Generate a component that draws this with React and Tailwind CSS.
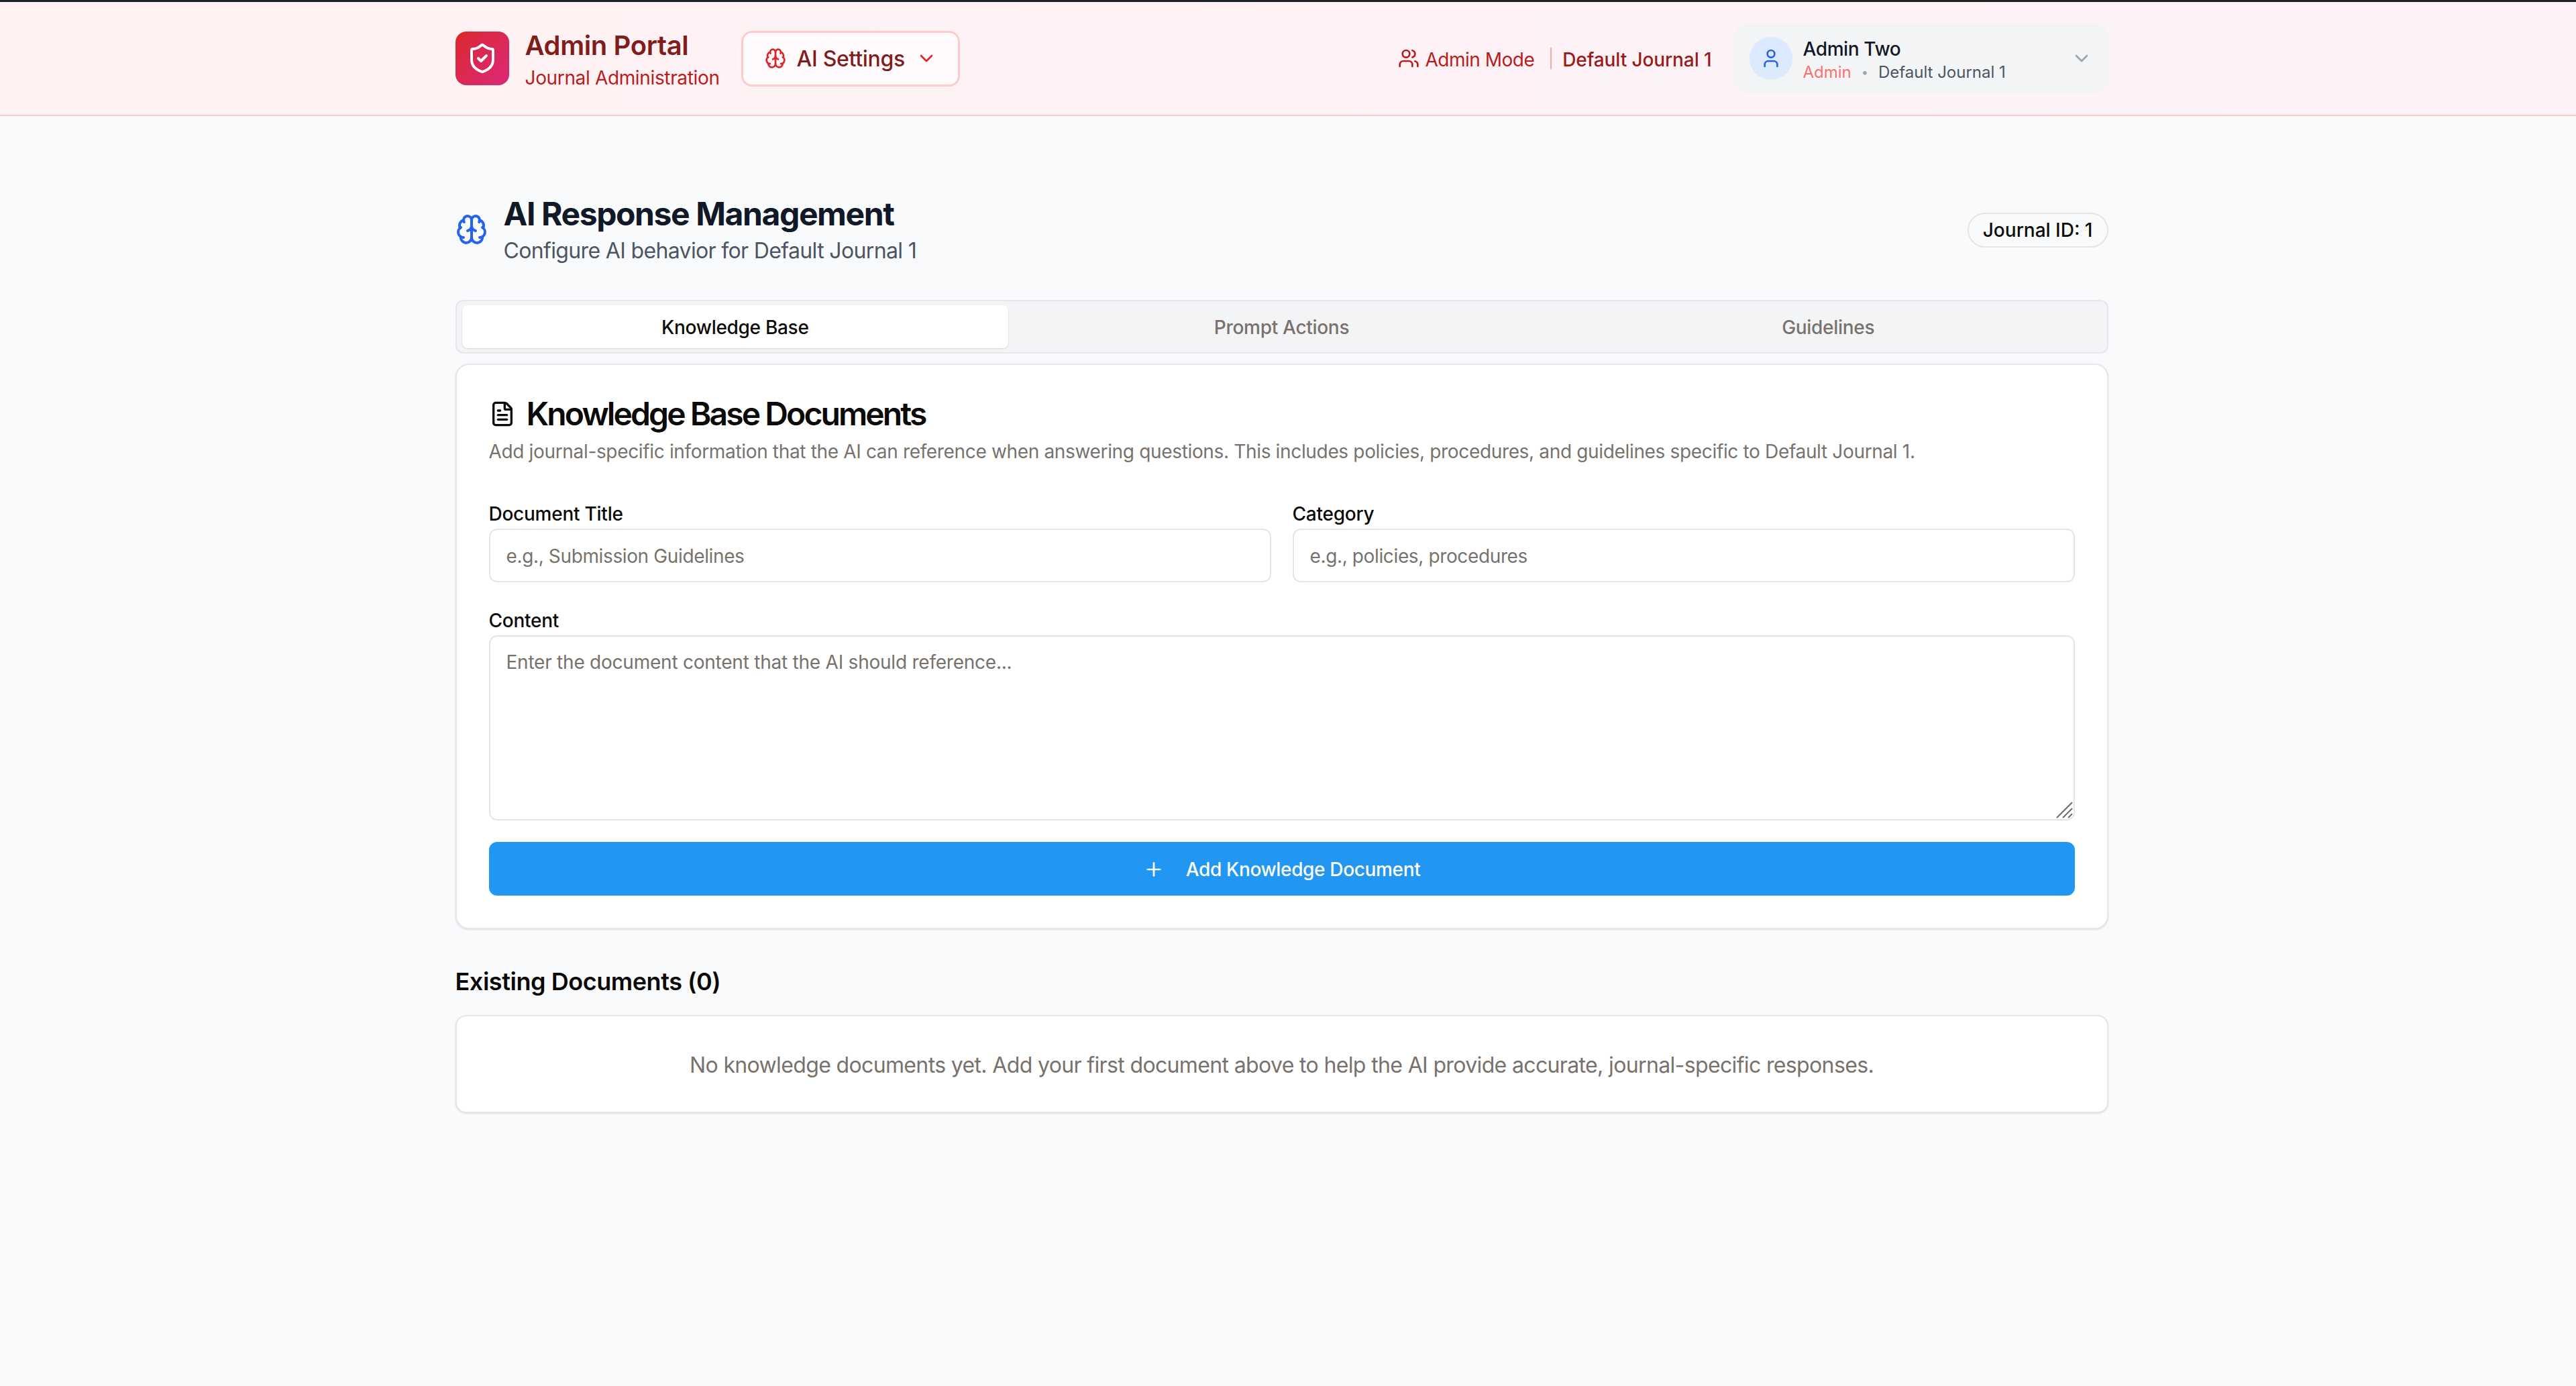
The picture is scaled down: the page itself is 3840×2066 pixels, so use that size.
import React from "react";
import { ShieldCheck, Brain, ChevronDown, Users, User, FileText, Plus } from "lucide-react";

export default function App() {
  return (
    <div className="min-h-[2066px] bg-[#f9fafb] font-['Inter',sans-serif] text-[#0c0a09] pr-[19px]">
      <header className="h-[173px] -mr-[19px] pr-[19px] border-t-[3px] border-t-[#1f2229] border-b-[2px] border-b-[#fecaca] bg-gradient-to-r from-[#fef2f2] to-[#fdf2f8]">
        <div className="w-[2464px] mx-auto h-full flex items-center justify-between">
          <div className="flex items-center">
            <div className="w-[80px] h-[80px] rounded-[16px] bg-gradient-to-br from-[#dc2626] to-[#db2777] flex items-center justify-center">
              <ShieldCheck size={48} color="#ffffff" strokeWidth={2} />
            </div>
            <div className="ml-[24px] pt-[6px]">
              <div className="text-[40px] leading-[48px] font-semibold text-[#7f1d1d] tracking-[-0.4px]">Admin Portal</div>
              <div className="mt-[4px] text-[28px] leading-[40px] text-[#b91c1c] tracking-[-0.35px]">Journal Administration</div>
            </div>
            <button className="ml-[32px] w-[326px] h-[83px] rounded-[16px] border-[3px] border-[#fecaca] bg-[#fffafb] flex items-center pl-[32px] text-[32px] font-medium text-[#7f1d1d] tracking-[-0.3px]">
              <Brain size={32} color="#dc2626" strokeWidth={2} />
              <span className="ml-[16px] pt-[2px]">AI Settings</span>
              <ChevronDown size={32} color="#dc2626" strokeWidth={2} className="ml-[16px]" />
            </button>
          </div>
          <div className="flex items-center -ml-[1px]">
            <Users size={32} color="#b91c1c" strokeWidth={2} />
            <span className="ml-[9px] pt-[3px] text-[28px] text-[#b91c1c] tracking-[-0.5px]">Admin Mode</span>
            <span className="ml-[24px] w-[2px] h-[32px] bg-[#fca5a5]" />
            <span className="ml-[16px] pt-[3px] text-[28px] font-medium text-[#991b1b] tracking-[-0.1px]">Default Journal 1</span>
            <div className="ml-[33px] w-[558px] h-[104px] rounded-[20px] bg-[#f3f4f6] flex items-center pl-[23px] pr-[24px]">
              <div className="w-[64px] h-[64px] rounded-full bg-[#dbeafe] flex items-center justify-center">
                <User size={32} color="#2563eb" strokeWidth={2} />
              </div>
              <div className="ml-[16px] flex-1 pt-[5px]">
                <div className="text-[28px] leading-[36px] font-medium text-[#111827] tracking-[-0.4px]">Admin Two</div>
                <div className="mt-[1px] text-[24px] leading-[32px] flex items-center text-[#4b5563]">
                  <span className="text-[#f87171]">Admin</span>
                  <span className="mx-[15px] text-[#9ca3af] text-[18px]">•</span>
                  <span>Default Journal 1</span>
                </div>
              </div>
              <ChevronDown size={32} color="#9ca3af" strokeWidth={2} />
            </div>
          </div>
        </div>
      </header>

      <main className="w-[2464px] mx-auto pt-[116px]">
        <div className="flex items-center justify-between">
          <div className="flex items-center">
            <Brain size={48} color="#2563eb" strokeWidth={2} className="-mt-[4px]" />
            <div className="ml-[24px]">
              <h1 className="text-[48px] leading-[60px] font-bold text-[#111827] tracking-[-1.4px]">AI Response Management</h1>
              <p className="pt-[1px] text-[32px] leading-[48px] text-[#4b5563] tracking-[-0.65px]">Configure AI behavior for Default Journal 1</p>
            </div>
          </div>
          <span className="-mt-[2px] h-[52px] px-[21px] rounded-full border-[2px] border-[#e7e5e4] flex items-center text-[28px] font-medium">Journal ID: 1</span>
        </div>

        <div className="mt-[49px] h-[80px] rounded-[12px] border-[2px] border-[#e5e7eb] bg-[#f3f4f6] grid grid-cols-3 items-center px-[8px] text-[28px] font-medium text-[#78716c] tracking-[-0.3px]">
          <div className="h-[64px] pt-[2px] rounded-[8px] bg-white text-[#0c0a09] flex items-center justify-center shadow-sm">Knowledge Base</div>
          <div className="pt-[2px] text-center">Prompt Actions</div>
          <div className="pt-[2px] text-center">Guidelines</div>
        </div>

        <section className="mt-[15px] h-[843px] rounded-[20px] border-[2px] border-[#e5e7eb] bg-white shadow-sm px-[48px] pt-[41px]">
          <div className="flex items-center h-[64px]">
            <FileText size={40} color="#0c0a09" strokeWidth={2} />
            <h2 className="ml-[16px] text-[48px] leading-[64px] font-semibold tracking-[-2.9px]">Knowledge Base Documents</h2>
          </div>
          <p className="mt-[4px] text-[28px] leading-[40px] text-[#78716c] tracking-[-0.34px]">Add journal-specific information that the AI can reference when answering questions. This includes policies, procedures, and guidelines specific to Default Journal 1.</p>

          <div className="mt-[57px] grid grid-cols-2 gap-[32px]">
            <label className="block">
              <span className="block text-[28px] leading-[32px] font-medium tracking-[-0.25px]">Document Title</span>
              <input className="mt-[6px] block w-full h-[80px] pt-[1px] rounded-[12px] border-[2px] border-[#e7e5e4] px-[24px] text-[28px] tracking-[-0.37px] placeholder:text-[#78716c] outline-none" placeholder="e.g., Submission Guidelines" />
            </label>
            <label className="block">
              <span className="block text-[28px] leading-[32px] font-medium tracking-[-0.25px]">Category</span>
              <input className="mt-[6px] block w-full h-[80px] pt-[1px] rounded-[12px] border-[2px] border-[#e7e5e4] px-[24px] text-[28px] tracking-[-0.37px] placeholder:text-[#78716c] outline-none" placeholder="e.g., policies, procedures" />
            </label>
          </div>

          <label className="block mt-[41px]">
            <span className="block text-[28px] leading-[32px] font-medium tracking-[-0.25px]">Content</span>
            <span className="block relative mt-[6px]">
              <textarea className="block w-full h-[276px] rounded-[12px] border-[2px] border-[#e7e5e4] px-[24px] pt-[18px] pb-[14px] text-[28px] leading-[40px] tracking-[-0.23px] placeholder:text-[#78716c] outline-none resize-none" placeholder="Enter the document content that the AI should reference..." />
              <svg className="absolute right-[3px] bottom-[3px]" width="26" height="26" viewBox="0 0 26 26" fill="none" stroke="#6b6b6b" strokeWidth="2">
                <path d="M2 25L25 2M11 25L25 11M19 25L25 19" />
              </svg>
            </span>
          </label>

          <button className="mt-[32px] w-full h-[80px] pt-[2px] rounded-[12px] bg-[#2196f3] text-white text-[28px] font-medium tracking-[-0.35px] flex items-center justify-center">
            <Plus size={32} color="#ffffff" strokeWidth={2} />
            <span className="ml-[32px]">Add Knowledge Document</span>
          </button>
        </section>

        <h3 className="mt-[54px] text-[36px] leading-[48px] font-semibold tracking-[-0.45px]">Existing Documents (0)</h3>
        <div className="mt-[26px] h-[146px] pt-[3px] rounded-[16px] border-[2px] border-[#e5e7eb] bg-white shadow-sm flex items-center justify-center text-[32px] text-[#78716c] tracking-[-0.64px]">
          No knowledge documents yet. Add your first document above to help the AI provide accurate, journal-specific responses.
        </div>
      </main>
    </div>
  );
}
